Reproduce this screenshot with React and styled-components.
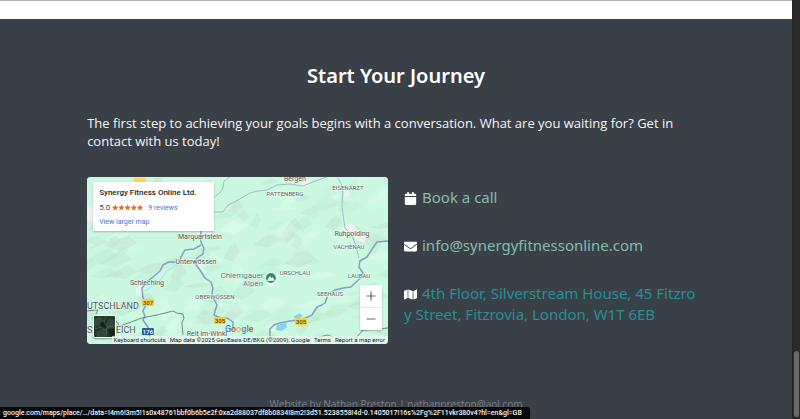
import React from 'react';
import styled, { createGlobalStyle } from 'styled-components';
import { FaCalendar, FaEnvelope, FaMap } from 'react-icons/fa';

const GlobalStyle = createGlobalStyle`
  *, *::before, *::after {
    box-sizing: border-box;
  }
  body {
    margin: 0;
    background: #3a4048;
    font-family: 'Noto Sans', 'Open Sans', sans-serif;
  }
`;

// Page frame
const Window = styled.div`
  display: flex;
  min-height: 100vh;
`;

const Page = styled.div`
  flex: 1;
  min-width: 0;
  display: flex;
  flex-direction: column;
`;

const PreviousSection = styled.div`
  height: 19px;
  background: #fff;
  border-top: 1px solid #b5b5b5;
`;

const Section = styled.section`
  flex: 1;
  width: 78%;
  margin: 0 auto;
  padding-top: 42px;
`;

const Title = styled.h2`
  margin: 0 0 23px;
  font-size: 20px;
  line-height: 30px;
  font-weight: 600;
  text-align: center;
  color: #fff;
`;

const Intro = styled.p`
  margin: 0 0 27px;
  font-family: 'Open Sans', sans-serif;
  font-size: 13px;
  line-height: 18px;
  font-weight: 500;
  color: #f5f5f5;
`;

const Columns = styled.div`
  display: grid;
  grid-template-columns: 1fr 1fr;
  gap: 16px;
`;

const ContactList = styled.ul`
  list-style: none;
  margin: 0;
  padding: 10px 4px 0 0;
  display: flex;
  flex-direction: column;
  gap: 27px;
`;

const ContactItem = styled.li`
  font-size: 15px;
  line-height: 21px;
  color: #fff;
  word-break: break-all;

  svg {
    margin-right: 5px;
    font-size: 13px;
    vertical-align: -2px;
  }
`;

const ContactLink = styled.a`
  color: ${(props) => (props.$active ? '#28908f' : '#84bda8')};
  text-decoration: none;
`;

const Footer = styled.footer`
  padding-bottom: 8px;
  font-family: 'Open Sans', sans-serif;
  font-size: 10px;
  line-height: 14px;
  font-weight: 500;
  text-align: center;
  color: #7b8087;
`;

const Scrollbar = styled.div`
  width: 8px;
  padding: 2px 1px;
  display: flex;
  flex-direction: column;
  justify-content: flex-end;
  background: #2b2b2b;
  border-left: 1px solid #222;
`;

const Thumb = styled.div`
  height: 16%;
  border-radius: 3px;
  background: #6a6a6a;
`;

const StatusBar = styled.div`
  position: fixed;
  left: 0;
  bottom: 0;
  padding: 0 8px 0 3px;
  font-family: Roboto, sans-serif;
  font-size: 7px;
  line-height: 12px;
  font-weight: 500;
  white-space: nowrap;
  color: #f2f2f2;
  background: #08090b;
  border-radius: 0 3px 0 0;
`;

// Map
const MapFrame = styled.div`
  position: relative;
  height: 167px;
  overflow: hidden;
  border-radius: 4px;
  background: #cbf6df;
  font-family: Roboto, sans-serif;
`;

const MapDrawing = styled.svg`
  display: block;
  width: 100%;
  height: 100%;
`;

const PlaceCard = styled.div`
  position: absolute;
  top: 5px;
  left: 6px;
  width: 121px;
  padding: 5px 6px 4px;
  background: #fff;
  border-radius: 1px;
  box-shadow: 0 1px 2px rgba(0, 0, 0, 0.25);
`;

const PlaceName = styled.div`
  font-size: 8px;
  line-height: 11px;
  font-weight: 500;
  white-space: nowrap;
  color: #1c1c1c;
`;

const Rating = styled.div`
  display: flex;
  align-items: center;
  padding: 4px 0;
  font-size: 8px;
  line-height: 11px;
  color: #444;
`;

const Stars = styled.svg`
  width: 31px;
  height: 7px;
  margin: 0 5px 0 2px;
  fill: #e2702a;
`;

const MapLink = styled.a`
  display: block;
  font-size: 7px;
  line-height: 10px;
  color: #3f74dc;
  text-decoration: none;
`;

const ZoomControl = styled.div`
  position: absolute;
  right: 6px;
  bottom: 14px;
  width: 22px;
  display: flex;
  flex-direction: column;
  background: #fff;
  border-radius: 1px;
  box-shadow: 0 1px 2px rgba(0, 0, 0, 0.25);
`;

const ZoomButton = styled.button`
  height: 22px;
  padding: 0;
  border: 0;
  background: none;
  display: flex;
  align-items: center;
  justify-content: center;

  & + & {
    height: 23px;
    border-top: 1px solid #e8e8e8;
  }
`;

const LayerButton = styled.button`
  position: absolute;
  left: 6px;
  bottom: 6px;
  width: 23px;
  height: 23px;
  padding: 0;
  overflow: hidden;
  border: 1px solid #fff;
  border-radius: 2px;
  background: #24352b;
  box-shadow: 0 1px 2px rgba(0, 0, 0, 0.4);

  svg {
    display: block;
  }
`;

const Attribution = styled.div`
  position: absolute;
  right: 0;
  bottom: 0;
  display: flex;
  gap: 4px;
  padding: 0 3px 0 2px;
  font-size: 6px;
  line-height: 8px;
  white-space: nowrap;
  color: #222;
  background: rgba(235, 247, 240, 0.7);
`;

// small repeatable generator so the hill shading is the same on every render
const makeHills = (count) => {
  const hills = [];
  let seed = 11;
  const next = () => {
    seed = (seed * 16807) % 2147483647;
    return seed / 2147483647;
  };
  const fills = ['#b9e6ce', '#c0eed6', '#dcfdec', '#c3dccb', '#d8fbe8', '#bae9d0'];
  for (let i = 0; i < count; i++) {
    const x = next() * 320 - 15;
    const y = next() * 180 - 10;
    const w = 10 + next() * 24;
    const h = 5 + next() * 14;
    const points = [
      [x, y + h * 0.8],
      [x + w * 0.4, y + h * 0.2],
      [x + w * 0.7, y],
      [x + w, y + h * 0.5],
      [x + w * 0.5, y + h],
    ];
    hills.push({
      points: points.map((p) => p.map((n) => n.toFixed(1)).join(',')).join(' '),
      fill: fills[Math.floor(next() * fills.length)],
    });
  }
  return hills;
};

const hills = makeHills(170);

const roads = [
  'M90 85L82 85L76 88L73 94L66 100L60 105L55 111L56 120L59 128L56 134L58 139L56 143L61 150L63 161',
  'M114 50V65L117 71L116 77L110 81L108 86L113 93L118 101L124 105L126 111L125 118L130 128L127 138L134 141H140L146 145V153',
  'M114 68L107 72L98 73L94 80L92 86',
  'M183 160V152L187 148L193 146L203 144L210 143L219 141L225 138L230 130L235 128L238 126L241 118L248 113L256 111L264 110L268 106L275 100L276 96L272 90L273 84L280 80L290 65L301 64',
];

const minorRoads = [
  'M126 41V35L136 35L141 28L153 22L163 16L171 14L180 13L190 8L203 7L216 9L226 5L240 0',
  'M126 21L133 16L136 11L137 4L143 0',
  'M251 1L256 10L255 30L258 51L265 58L268 66L272 81',
];

const towns = [
  [208, 4, 'Bergen'],
  [113, 62, 'Marquartstein'],
  [265, 59, 'Ruhpolding'],
  [109, 87, 'Unterwössen'],
  [60, 108, 'Schleching'],
  [120, 159, 'Reit im-Winkl'],
];

const districts = [
  [198, 19, 'PATTENBERG'],
  [261, 13, 'EISENÄRZT'],
  [262, 72, 'VACHENAU'],
  [208, 98, 'URSCHLAU'],
  [272, 101, 'LAUBAU'],
  [128, 122, 'OBERWÖSSEN'],
  [243, 119, 'SEEHAUS'],
];

const shields = [
  [61, 125, '307', '#f4cf3c', '#5b4a12'],
  [133, 143, '305', '#f4cf3c', '#5b4a12'],
  [214, 144, '305', '#f4cf3c', '#5b4a12'],
  [61, 154, '176', '#2c5ea8', '#fff'],
];

const Terrain = () => (
  <MapDrawing viewBox="0 0 301 167" preserveAspectRatio="xMidYMid slice" aria-label="Map">
    <rect width="301" height="167" fill="#cbf8e0" />
    {hills.map((hill, i) => (
      <polygon key={i} points={hill.points} fill={hill.fill} opacity="0.4" />
    ))}

    <g fill="#eef1f0">
      <path d="M108 54l8-3 9 2-2 6-9 1z" />
      <path d="M256 50l8-4 6 6 9 6-1 8-7-2-5-6-10-2z" />
      <path d="M48 113l7-5 2 6-5 5z" />
      <path d="M105 84l7 2 8 11-6-4z" />
      <path d="M213 5l8-2 2 4-7 4z" />
      <path d="M258 13l5 2-1 4-5 1z" />
      <path d="M0 29h6l4 7-4 8H0z" />
    </g>
    <path d="M190 148l9-2 1 4-5 4-6-1zM206 140l7-4 3 3-5 3z" fill="#82d4ea" />
    <path d="M58 114l14-9 8-11 12-7" fill="none" stroke="#a5e6ea" />

    <g fill="none" strokeLinejoin="round">
      {minorRoads.map((d) => (
        <path key={d} d={d} stroke="#91aeba" strokeWidth="0.8" />
      ))}
      {roads.map((d) => (
        <path key={d} d={d} stroke="#849fc2" strokeWidth="1.5" />
      ))}
      <path
        d="M0 134l11-1-2 4M28 143l5 6 22-8 15-3 16-4 4 2 6 1 1 4-2 5 1 12M301 151l-9 1-16 1-7 8M232 160l9-2 5 2"
        stroke="#4f5f58"
        strokeWidth="0.7"
      />
    </g>

    <rect x="47" y="1" width="12" height="5" fill="#f4d65c" />
    {shields.map(([x, y, label, fill, color], i) => (
      <g key={i}>
        <rect x={x - 6} y={y - 3} width="12" height="7" rx="1" fill={fill} />
        <text x={x} y={y + 3} textAnchor="middle" fontSize="6" fontWeight="500" fill={color}>
          {label}
        </text>
      </g>
    ))}

    <g textAnchor="middle" stroke="#effbf5" strokeWidth="1" paintOrder="stroke">
      <g fontSize="7" fill="#4b5553">
        {towns.map(([x, y, label]) => (
          <text key={label} x={x} y={y}>
            {label}
          </text>
        ))}
      </g>
      <g fontSize="6" fill="#59635f">
        {districts.map(([x, y, label]) => (
          <text key={label} x={x} y={y}>
            {label}
          </text>
        ))}
      </g>
      <g fontSize="8" fill="#4d817c">
        <text x="155" y="101">Chiemgauer</text>
        <text x="166" y="109">Alpen</text>
      </g>
      <g fontSize="9" fill="#4c5753" textAnchor="start">
        <text x="0" y="132">UTSCHLAND</text>
        <text x="0" y="156">S</text>
        <text x="29" y="156">EICH</text>
      </g>
    </g>

    <path d="M184 110c-4-4-6-6-6-9a6 6 0 0 1 12 0c0 3-2 5-6 9z" fill="#fff" />
    <circle cx="184" cy="101" r="5" fill="#259168" />
    <path d="M180.500 103.500l2.500-4 1.500 2 1-1 2 3z" fill="#fff" stroke="#fff" strokeWidth="0.6" />

    <text x="138" y="155" fontFamily="Roboto" fontSize="9" fontWeight="500">
      <tspan fill="#4285f4">G</tspan>
      <tspan fill="#ea4335">o</tspan>
      <tspan fill="#fbbc05">o</tspan>
      <tspan fill="#4285f4">g</tspan>
      <tspan fill="#34a853">l</tspan>
      <tspan fill="#ea4335">e</tspan>
    </text>
  </MapDrawing>
);

const starPath = 'M3 0l.9 2.100 2.300.2-1.700 1.500.5 2.300L3 4.900 1 6.100l.5-2.300L-.2 2.300l2.300-.2z';

const LocationMap = () => (
  <MapFrame>
    <Terrain />
    <PlaceCard>
      <PlaceName>Synergy Fitness Online Ltd.</PlaceName>
      <Rating>
        5.0
        <Stars viewBox="0 0 31 7" aria-hidden="true">
          {[0, 1, 2, 3, 4].map((n) => (
            <path key={n} d={starPath} transform={`translate(${n * 6.2 + 0.2} 0.4)`} />
          ))}
        </Stars>
        <MapLink href="#reviews">9 reviews</MapLink>
      </Rating>
      <MapLink href="#map">View larger map</MapLink>
    </PlaceCard>
    <LayerButton aria-label="Show satellite imagery">
      <svg width="21" height="21" viewBox="0 0 21 21">
        <path d="M0 3l6-3 4 4-3 5-7 2zM11 8l5-6 5 3v6l-6 2zM2 16l7-4 5 4-3 5H3z" fill="#34483a" />
        <path d="M6 7l5-2 2 6-5 2zM14 14l6-1v6l-4 1z" fill="#16221b" />
        <path d="M1 13l6-2 4 3 4-4 6 1M12 0l-2 6 3 5-1 9" fill="none" stroke="#5c7060" strokeWidth="0.6" />
      </svg>
    </LayerButton>
    <ZoomControl>
      <ZoomButton aria-label="Zoom in">
        <svg width="10" height="10" viewBox="0 0 10 10" stroke="#666" strokeWidth="1.2">
          <path d="M5 0.500v9M0.500 5h9" />
        </svg>
      </ZoomButton>
      <ZoomButton aria-label="Zoom out">
        <svg width="10" height="10" viewBox="0 0 10 10" stroke="#666" strokeWidth="1.2">
          <path d="M0.500 5h9" />
        </svg>
      </ZoomButton>
    </ZoomControl>
    <Attribution>
      <span>Keyboard shortcuts</span>
      <span>Map data ©2025 GeoBasis-DE/BKG (©2009), Google</span>
      <span>Terms</span>
      <span>Report a map error</span>
    </Attribution>
  </MapFrame>
);

const App = () => (
  <>
    <GlobalStyle />
    <Window>
      <Page>
        <PreviousSection />
        <Section>
          <Title>Start Your Journey</Title>
          <Intro>
            The first step to achieving your goals begins with a conversation. What are you waiting for? Get in
            contact with us today!
          </Intro>
          <Columns>
            <LocationMap />
            <ContactList>
              <ContactItem>
                <FaCalendar />
                <ContactLink href="#book">Book a call</ContactLink>
              </ContactItem>
              <ContactItem>
                <FaEnvelope />
                <ContactLink href="mailto:info@synergyfitnessonline.com">info@synergyfitnessonline.com</ContactLink>
              </ContactItem>
              <ContactItem>
                <FaMap />
                <ContactLink href="#address" $active>
                  4th Floor, Silverstream House, 45 Fitzroy Street, Fitzrovia, London, W1T 6EB
                </ContactLink>
              </ContactItem>
            </ContactList>
          </Columns>
        </Section>
        <Footer>Website by Nathan Preston | nathanpreston@aol.com</Footer>
      </Page>
      <Scrollbar>
        <Thumb />
      </Scrollbar>
    </Window>
    <StatusBar>
      google.com/maps/place/…/data=!4m6!3m5!1s0x48761bbf0b6b5e2f:0xa2d88037df8b0834!8m2!3d51.5238558!4d-0.1405017!16s%2Fg%2F11vkr380v4?hl=en&amp;gl=GB
    </StatusBar>
  </>
);

export default App;
